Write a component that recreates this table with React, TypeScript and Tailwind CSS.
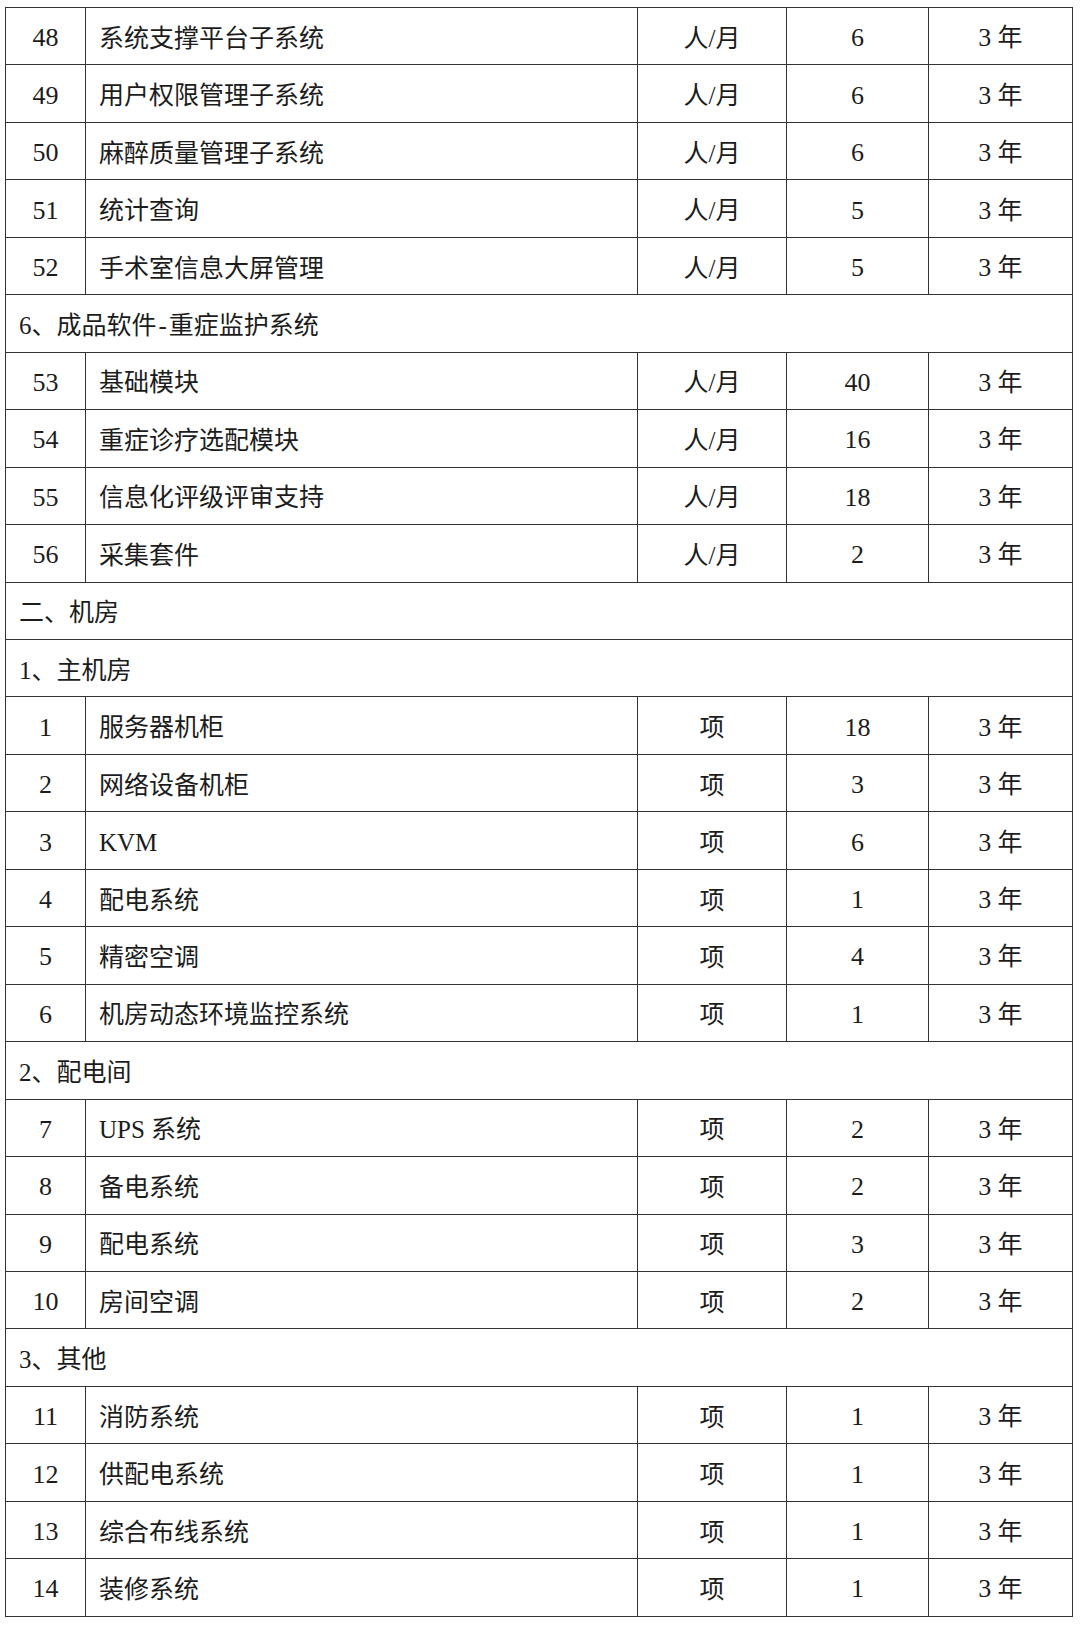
import React from 'react';

type Row =
  | { kind: 'item'; no: string; name: string; unit: string; qty: string }
  | { kind: 'section'; title: React.ReactNode };

const item = (no: string, name: string, unit: string, qty: string): Row => ({
  kind: 'item',
  no,
  name,
  unit,
  qty,
});

const ROWS: Row[] = [
  item('48', '系统支撑平台子系统', '人/月', '6'),
  item('49', '用户权限管理子系统', '人/月', '6'),
  item('50', '麻醉质量管理子系统', '人/月', '6'),
  item('51', '统计查询', '人/月', '5'),
  item('52', '手术室信息大屏管理', '人/月', '5'),
  {
    kind: 'section',
    title: (
      <>
        6、成品软件<span className="mx-[2px]">-</span>重症监护系统
      </>
    ),
  },
  item('53', '基础模块', '人/月', '40'),
  item('54', '重症诊疗选配模块', '人/月', '16'),
  item('55', '信息化评级评审支持', '人/月', '18'),
  item('56', '采集套件', '人/月', '2'),
  { kind: 'section', title: '二、机房' },
  { kind: 'section', title: '1、主机房' },
  item('1', '服务器机柜', '项', '18'),
  item('2', '网络设备机柜', '项', '3'),
  item('3', 'KVM', '项', '6'),
  item('4', '配电系统', '项', '1'),
  item('5', '精密空调', '项', '4'),
  item('6', '机房动态环境监控系统', '项', '1'),
  { kind: 'section', title: '2、配电间' },
  item('7', 'UPS 系统', '项', '2'),
  item('8', '备电系统', '项', '2'),
  item('9', '配电系统', '项', '3'),
  item('10', '房间空调', '项', '2'),
  { kind: 'section', title: '3、其他' },
  item('11', '消防系统', '项', '1'),
  item('12', '供配电系统', '项', '1'),
  item('13', '综合布线系统', '项', '1'),
  item('14', '装修系统', '项', '1'),
];

const cell = 'border-[1.5px] border-[#333] align-middle pt-[4px]';

export default function App() {
  return (
    <div
      className="min-h-[1626px] w-[1080px] bg-white pt-[7px] pl-[5px] text-[25px] text-[#1c1c1c]"
      style={{ fontFamily: '"Liberation Serif", "Noto Sans CJK SC", serif' }}
    >
      <table className="w-[1067px] table-fixed border-collapse">
        <colgroup>
          <col className="w-[80px]" />
          <col className="w-[552px]" />
          <col className="w-[149px]" />
          <col className="w-[142px]" />
          <col className="w-[144px]" />
        </colgroup>
        <tbody>
          {ROWS.map((row, i) =>
            row.kind === 'section' ? (
              <tr key={i} className="h-[57.46px] leading-none">
                <td colSpan={5} className={`${cell} pl-[13px]`}>
                  {row.title}
                </td>
              </tr>
            ) : (
              <tr key={i} className="h-[57.46px] leading-none">
                <td className={`${cell} text-center text-[26px]`}>{row.no}</td>
                <td className={`${cell} pl-[13px]`}>{row.name}</td>
                <td className={`${cell} text-center`}>{row.unit}</td>
                <td className={`${cell} text-center text-[26px]`}>{row.qty}</td>
                <td className={`${cell} text-center`}>
                  <span className="text-[26px]">3</span> 年
                </td>
              </tr>
            ),
          )}
        </tbody>
      </table>
    </div>
  );
}
